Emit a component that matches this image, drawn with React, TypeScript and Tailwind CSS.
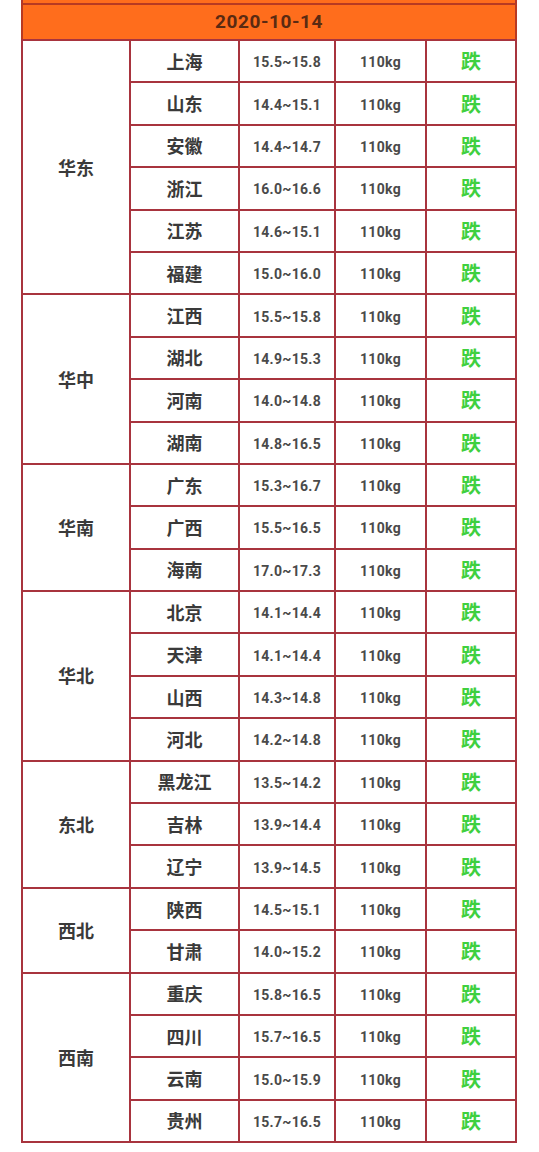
import React from "react";

const groups: { name: string; rows: [string, string][] }[] = [
  { name: "华东", rows: [["上海", "15.5~15.8"], ["山东", "14.4~15.1"], ["安徽", "14.4~14.7"], ["浙江", "16.0~16.6"], ["江苏", "14.6~15.1"], ["福建", "15.0~16.0"]] },
  { name: "华中", rows: [["江西", "15.5~15.8"], ["湖北", "14.9~15.3"], ["河南", "14.0~14.8"], ["湖南", "14.8~16.5"]] },
  { name: "华南", rows: [["广东", "15.3~16.7"], ["广西", "15.5~16.5"], ["海南", "17.0~17.3"]] },
  { name: "华北", rows: [["北京", "14.1~14.4"], ["天津", "14.1~14.4"], ["山西", "14.3~14.8"], ["河北", "14.2~14.8"]] },
  { name: "东北", rows: [["黑龙江", "13.5~14.2"], ["吉林", "13.9~14.4"], ["辽宁", "13.9~14.5"]] },
  { name: "西北", rows: [["陕西", "14.5~15.1"], ["甘肃", "14.0~15.2"]] },
  { name: "西南", rows: [["重庆", "15.8~16.5"], ["四川", "15.7~16.5"], ["云南", "15.0~15.9"], ["贵州", "15.7~16.5"]] },
];

const cjk = { fontFamily: '"Noto Sans CJK SC", "Noto Sans", sans-serif' };
const num = { fontFamily: 'Roboto, "Noto Sans CJK SC", sans-serif' };

export default function App() {
  return (
    <div className="w-[539px] h-[1152px] bg-white overflow-hidden">
      <div className="ml-[21px] w-[496px]">
        <div className="h-[3px] bg-[#ff6d1c] border-x-2 border-[#b0392e]" />
        <div className="h-[38px] bg-[#ff6d1c] border-2 border-[#b83a22] flex items-center justify-center">
          <span className="text-[19px] font-bold text-[#5a2a12] tracking-[0.6px]" style={num}>2020-10-14</span>
        </div>
        <table className="border-collapse table-fixed w-[494px] -mt-[2px]">
          <colgroup>
            <col className="w-[108px]" />
            <col className="w-[109px]" />
            <col className="w-[96px]" />
            <col className="w-[91px]" />
            <col className="w-[90px]" />
          </colgroup>
          <tbody>
            {groups.map((g) =>
              g.rows.map(([city, price], i) => (
                <tr key={city} className="h-[42.4px]">
                  {i === 0 && (
                    <td rowSpan={g.rows.length} className="border-2 border-[#a8343e] text-center align-middle p-0">
                      <span className="text-[18px] font-bold text-[#3a3a3a]" style={cjk}>{g.name}</span>
                    </td>
                  )}
                  <td className="border-2 border-[#a8343e] text-center align-middle p-0">
                    <span className="text-[18px] font-bold text-[#3a3a3a]" style={cjk}>{city}</span>
                  </td>
                  <td className="border-2 border-[#a8343e] text-center align-middle p-0">
                    <span className="text-[14px] font-bold text-[#4a4a4a] tracking-[0.3px]" style={num}>{price}</span>
                  </td>
                  <td className="border-2 border-[#a8343e] text-center align-middle p-0">
                    <span className="text-[14px] font-bold text-[#4a4a4a] tracking-[0.3px]" style={num}>110kg</span>
                  </td>
                  <td className="border-2 border-[#a8343e] text-center align-middle p-0">
                    <span className="text-[20px] font-bold text-[#3fd03f]" style={cjk}>跌</span>
                  </td>
                </tr>
              ))
            )}
          </tbody>
        </table>
      </div>
    </div>
  );
}
